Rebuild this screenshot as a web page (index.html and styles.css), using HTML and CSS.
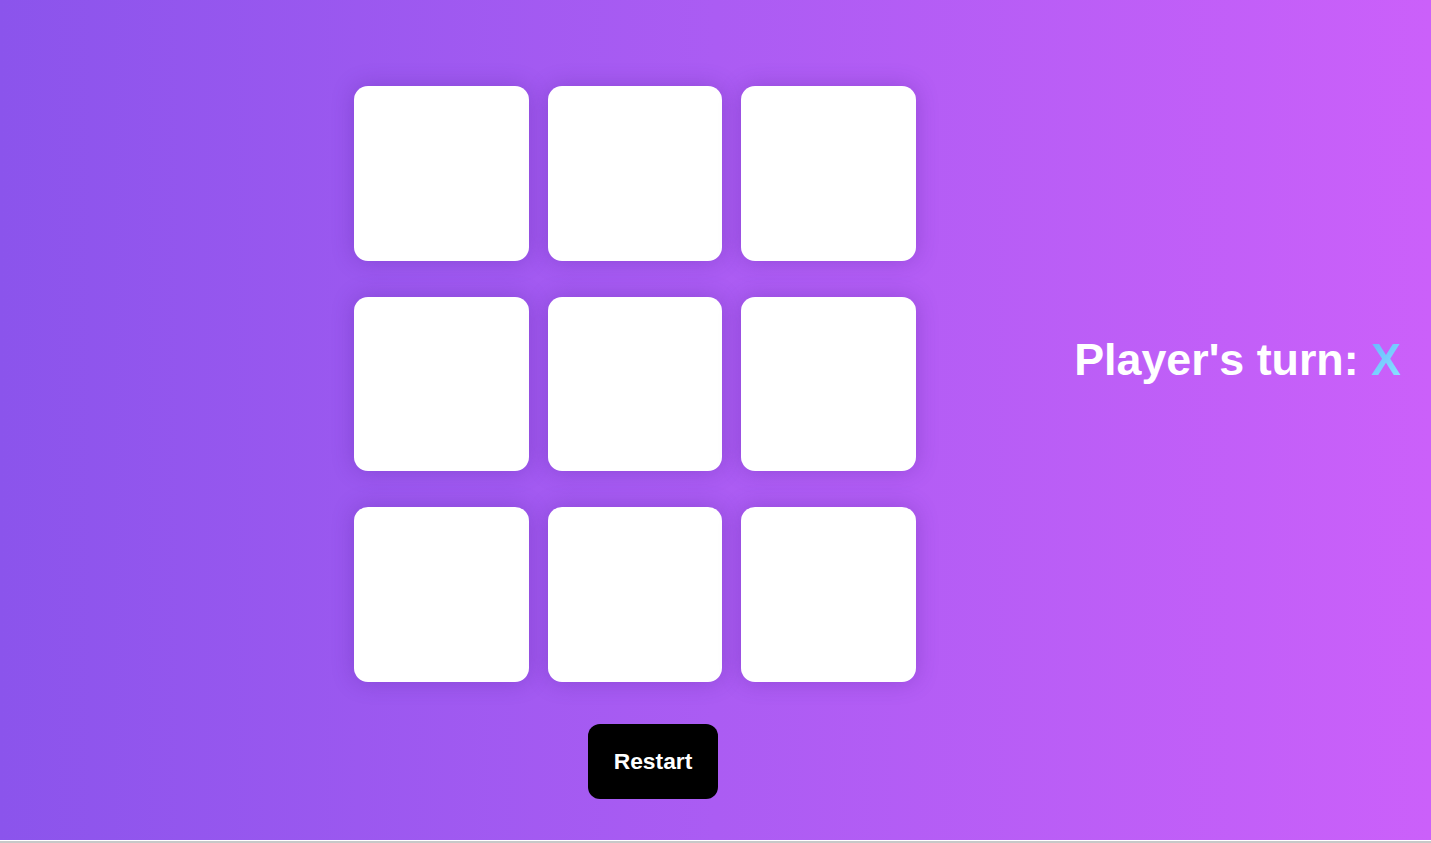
FILE: index.html
```html
<!DOCTYPE html>
<html lang="en">
<head>
<meta charset="utf-8">
<title>Tic Tac Toe</title>
<link rel="stylesheet" href="styles.css">
</head>
<body>
<div class="app">
  <div class="game">
    <div class="board">
      <div class="cell"></div>
      <div class="cell"></div>
      <div class="cell"></div>
      <div class="cell"></div>
      <div class="cell"></div>
      <div class="cell"></div>
      <div class="cell"></div>
      <div class="cell"></div>
      <div class="cell"></div>
    </div>
    <button class="restart">Restart</button>
  </div>
  <div class="status">Player's turn: <span class="player">X</span></div>
</div>
<div class="edge"></div>
</body>
</html>
```
FILE: styles.css
```css
html, body {
  margin: 0;
  padding: 0;
  background: #ffffff;
  overflow: hidden;
}
body {
  font-family: "Liberation Sans", Arial, sans-serif;
}
.app {
  height: 840px;
  box-sizing: border-box;
  padding: 86px 30px 0 354px;
  display: flex;
  align-items: flex-start;
  background: linear-gradient(to right, #8b54ec 0%, #ab5cf3 50%, #cb60fa 100%);
}
.game {
  width: 598px;
  display: flex;
  flex-direction: column;
  align-items: center;
}
.board {
  align-self: flex-start;
  display: grid;
  grid-template-columns: repeat(3, 174.5px);
  grid-auto-rows: 174.5px;
  column-gap: 19px;
  row-gap: 36px;
}
.cell {
  background: #ffffff;
  border-radius: 14px;
  box-shadow: 0 0 22px rgba(70, 20, 140, 0.28);
}
.restart {
  margin-top: 42px;
  padding: 25px 25.5px;
  line-height: 25px;
  font-family: "Liberation Sans", Arial, sans-serif;
  font-size: 22.8px;
  font-weight: bold;
  color: #ffffff;
  background: #000000;
  border: none;
  border-radius: 12px;
  cursor: pointer;
}
.status {
  margin-left: auto;
  margin-top: 248px;
  font-size: 44.8px;
  font-weight: bold;
  color: #ffffff;
  white-space: nowrap;
}
.player {
  background: linear-gradient(135deg, #62b4ff 0%, #8fe6ff 100%);
  -webkit-background-clip: text;
  background-clip: text;
  color: transparent;
}
.edge {
  height: 3px;
  background: linear-gradient(#ffffff 0 1px, #c8c8c8 1px);
}
```
